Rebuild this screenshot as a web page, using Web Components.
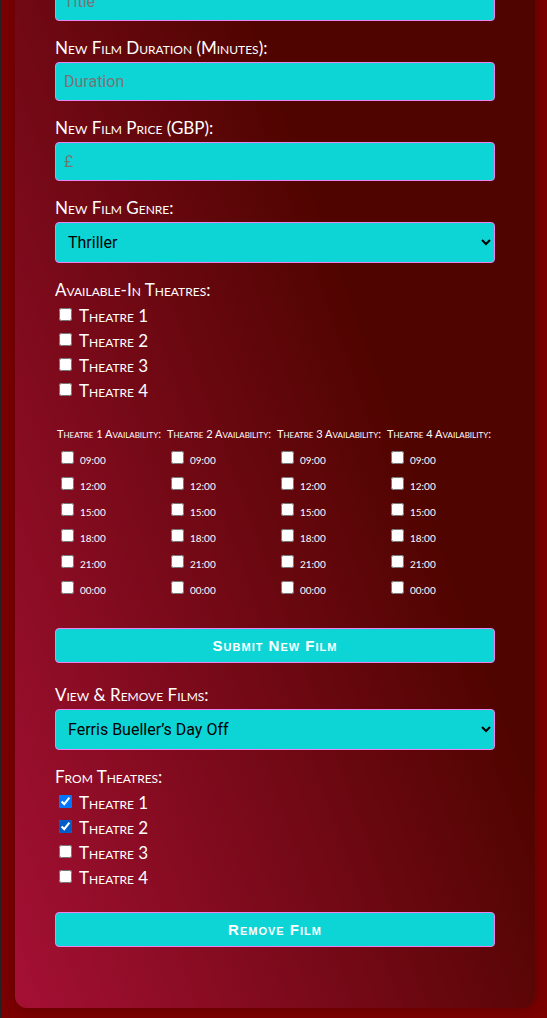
<!DOCTYPE html>
<html lang="en">
<head>
<meta charset="utf-8">
<meta name="viewport" content="width=device-width, initial-scale=1">
<title>Manage Films</title>
<style>
  html { background: #7c0000; }
  body {
    margin: 0;
    border-left: 1px solid #222;
    font-family: Lato, "Liberation Sans", sans-serif;
    font-size: 17px;
    color: #fff;
    overflow-x: hidden;
  }
</style>
</head>
<body>
<film-admin></film-admin>

<script>
const CONTROL = `
  .control {
    display: block;
    box-sizing: border-box;
    width: 100%;
    margin: 0;
    border: 1px solid violet;
    border-radius: 4px;
    background: #0dd5d6;
    font: 16px Roboto, "Liberation Sans", sans-serif;
  }`;

const LABEL = `
  .label {
    display: block;
    padding: 0;
    line-height: 20px;
    font-variant: small-caps;
  }`;

const define = (name, render) => customElements.define(name, class extends HTMLElement {
  connectedCallback() {
    if (this.shadowRoot) return;
    this.attachShadow({ mode: 'open' }).innerHTML = render(this);
  }
});

define('text-field', el => `
  <style>
    :host { display: block; }
    ${LABEL}
    ${CONTROL}
    .label { margin-bottom: 4px; }
    input.control { height: 39px; padding: 8px; }
    input::placeholder { color: #757575; opacity: 1; }
  </style>
  <label class="label" for="input"><slot></slot></label>
  <input class="control" id="input" type="text" placeholder="${el.getAttribute('placeholder')}">`);

define('select-field', el => `
  <style>
    :host { display: block; }
    ${LABEL}
    ${CONTROL}
    .label { margin-bottom: 4px; }
    select.control { height: 41px; padding: 8px 0 8px 8px; color: #000; }
  </style>
  <label class="label" for="select"><slot></slot></label>
  <select class="control" id="select"><option>${el.getAttribute('value')}</option></select>`);

define('check-item', el => `
  <style>
    :host { display: block; font-variant: small-caps; }
    label { display: flex; align-items: center; gap: 4px; height: 25px; line-height: 20px; }
    input { width: 13px; height: 13px; margin: 0 3px 3px 4px; }
    :host([active]) input { accent-color: #005cc8; }
  </style>
  <label><input type="checkbox"${el.hasAttribute('checked') ? ' checked' : ''}><span><slot></slot></span></label>`);

define('theatre-list', el => {
  const checked = (el.getAttribute('checked') || '').split(' ');
  const active = el.getAttribute('active');
  return `
  <style>
    :host { display: block; }
    fieldset { margin: 0; padding: 0; border: 0; min-width: 0; }
    ${LABEL}
    .label { margin-bottom: 3px; }
  </style>
  <fieldset>
    <legend class="label"><slot></slot></legend>
    ${['1', '2', '3', '4'].map(n => `<check-item${checked.includes(n) ? ' checked' : ''}${active === n ? ' active' : ''}>Theatre ${n}</check-item>`).join('')}
  </fieldset>`;
});

define('time-slots', () => `
  <style>
    :host { display: block; min-width: 0; font-size: 10px; }
    fieldset { margin: 0; padding: 0 0 0 2px; border: 0; min-width: 0; }
    ${LABEL}
    .label { margin-bottom: 3px; font-size: 11px; white-space: nowrap; }
    label { display: flex; align-items: center; gap: 3px; height: 26px; }
    input { width: 13px; height: 13px; margin: 0 3px 6px 4px; }
  </style>
  <fieldset>
    <legend class="label"><slot></slot></legend>
    ${['09:00', '12:00', '15:00', '18:00', '21:00', '00:00'].map(t => `<label><input type="checkbox"><span>${t}</span></label>`).join('')}
  </fieldset>`);

define('action-button', () => `
  <style>
    :host { display: block; }
    ${CONTROL}
    button.control {
      height: 35px;
      padding: 0;
      color: #fff;
      font: bold 15px "Liberation Sans", Arial, sans-serif;
      font-variant: small-caps;
      letter-spacing: 1px;
    }
  </style>
  <button class="control" type="button"><slot></slot></button>`);

define('film-admin', () => `
  <style>
    :host { display: block; overflow: hidden; padding-bottom: 10px; }
    main {
      display: flex;
      flex-direction: column;
      gap: 17px;
      margin: -42px 12px 0 14px;
      padding: 0 40px 61px;
      border-radius: 0 0 12px 12px;
      background: linear-gradient(70deg, #a51034, #500400 560px);
      box-shadow: 0 0 16px rgba(0, 0, 0, .25);
    }
    .slots { display: grid; grid-template-columns: repeat(4, 1fr); margin: 4px 0 8px; }
    .group, .last { margin-top: 5px; }
  </style>
  <main>
    <text-field placeholder="Title">New Film Title:</text-field>
    <text-field placeholder="Duration">New Film Duration (Minutes):</text-field>
    <text-field placeholder="£">New Film Price (GBP):</text-field>
    <select-field value="Thriller">New Film Genre:</select-field>
    <theatre-list>Available-In Theatres:</theatre-list>
    <div class="slots">
      <time-slots>Theatre 1 Availability:</time-slots>
      <time-slots>Theatre 2 Availability:</time-slots>
      <time-slots>Theatre 3 Availability:</time-slots>
      <time-slots>Theatre 4 Availability:</time-slots>
    </div>
    <action-button>Submit New Film</action-button>
    <select-field class="group" value="Ferris Bueller’s Day Off">View &amp; Remove Films:</select-field>
    <theatre-list checked="1 2" active="2">From Theatres:</theatre-list>
    <action-button class="last">Remove Film</action-button>
  </main>`);
</script>
</body>
</html>
